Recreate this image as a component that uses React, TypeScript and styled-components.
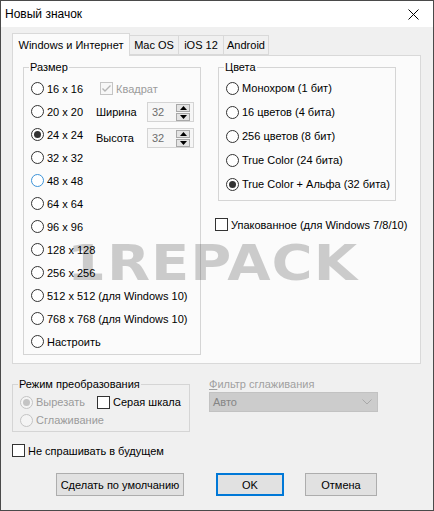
import React from "react";
import styled, { createGlobalStyle } from "styled-components";

const GlobalStyle = createGlobalStyle`
  html, body { margin: 0; padding: 0; background: #f0f0f0; }
  body { font-family: "Liberation Sans", Arial, sans-serif; font-size: 11px; color: #000; }
  * { box-sizing: border-box; }
`;

const Window = styled.div`
  position: relative;
  width: 434px;
  height: 511px;
  border: 1px solid #4a4a4a;
  background: #f0f0f0;
  display: flex;
  flex-direction: column;
  overflow: hidden;
`;

const TitleBar = styled.div`
  height: 26px;
  background: #fff;
  display: flex;
  align-items: center;
  justify-content: space-between;
  padding-left: 4px;
  flex: none;
`;

const TitleText = styled.span`
  font-size: 12px;
  color: #000;
`;

const CloseButton = styled.div`
  width: 30px;
  height: 26px;
  display: flex;
  align-items: center;
  justify-content: flex-start;
  padding-left: 5px;
`;

const Body = styled.div`
  flex: 1;
  padding: 6px 12px 0 11px;
  display: flex;
  flex-direction: column;
`;

const TabStrip = styled.div`
  display: flex;
  align-items: flex-end;
  height: 22px;
`;

const Tab = styled.div<{ $active?: boolean; $w: number }>`
  position: relative;
  z-index: ${(p) => (p.$active ? 2 : 1)};
  width: ${(p) => p.$w}px;
  height: ${(p) => (p.$active ? 23 : 20)}px;
  margin-bottom: ${(p) => (p.$active ? -1 : 0)}px;
  background: ${(p) => (p.$active ? "#fbfbfb" : "#f0f0f0")};
  border: 1px solid #d9d9d9;
  border-bottom: ${(p) => (p.$active ? "none" : "1px solid #d9d9d9")};
  border-left: ${(p) => (p.$active ? "1px solid #d9d9d9" : "none")};
  display: flex;
  align-items: center;
  justify-content: center;
  padding-bottom: ${(p) => (p.$active ? 1 : 0)}px;
  white-space: nowrap;
`;

const Panel = styled.div`
  height: 309px;
  border: 1px solid #d9d9d9;
  background: #fbfbfb;
  padding: 5px 0 0 10px;
  display: flex;
  align-items: flex-start;
`;

const GroupBox = styled.fieldset<{ $w: number; $pt: number; $pb: number }>`
  margin: 0;
  min-width: 0;
  width: ${(p) => p.$w}px;
  border: 1px solid #d5d5d5;
  padding: ${(p) => p.$pt}px 4px ${(p) => p.$pb}px 7px;
  flex: none;
`;

const Legend = styled.legend`
  margin-left: -2px;
  padding: 0 1px;
  line-height: 12px;
  font-size: 11px;
`;

const SizeLayout = styled.div`
  display: flex;
  align-items: flex-start;
`;

const RadioColumn = styled.div`
  width: 65px;
  flex: none;
  display: flex;
  flex-direction: column;
`;

const Option = styled.label<{ $h: number; $disabled?: boolean }>`
  height: ${(p) => p.$h}px;
  display: flex;
  align-items: center;
  gap: 3px;
  white-space: nowrap;
  color: ${(p) => (p.$disabled ? "#9b9b9b" : "#000")};
`;

const RadioMark = styled.span<{ $checked?: boolean; $disabled?: boolean; $focused?: boolean }>`
  width: 13px;
  height: 13px;
  flex: none;
  border-radius: 50%;
  border: 1px solid
    ${(p) => (p.$disabled ? "#c4c4c4" : p.$focused ? "#3c93d8" : "#333")};
  background: ${(p) => (p.$disabled ? "#f4f4f4" : "#fff")};
  display: flex;
  align-items: center;
  justify-content: center;
  &::after {
    content: "";
    display: ${(p) => (p.$checked ? "block" : "none")};
    width: 7px;
    height: 7px;
    border-radius: 50%;
    background: ${(p) => (p.$disabled ? "#c4c4c4" : "#333")};
  }
`;

const CheckMark = styled.span<{ $disabled?: boolean }>`
  width: 13px;
  height: 13px;
  flex: none;
  border: 1px solid ${(p) => (p.$disabled ? "#c4c4c4" : "#333")};
  background: ${(p) => (p.$disabled ? "#f7f7f7" : "#fff")};
  display: flex;
  align-items: center;
  justify-content: center;
`;

const SideControls = styled.div`
  display: flex;
  flex-direction: column;
`;

const SideCheck = styled(Option)`
  margin-left: 4px;
`;

const FieldRow = styled.div<{ $mt: number }>`
  display: flex;
  align-items: center;
  margin-top: ${(p) => p.$mt}px;
`;

const FieldLabel = styled.span`
  width: 51px;
  flex: none;
`;

const SpinBox = styled.div`
  width: 47px;
  height: 20px;
  border: 1px solid #d4d4d4;
  background: #f6f6f6;
  display: flex;
  align-items: center;
  justify-content: space-between;
  padding: 0 3px 0 4px;
`;

const SpinValue = styled.span`
  color: #6d6d6d;
`;

const SpinButtons = styled.div`
  width: 14px;
  display: flex;
  flex-direction: column;
  gap: 1px;
`;

const SpinButton = styled.div`
  height: 8px;
  background: #e3e3e3;
  border: 1px solid #a8a8a8;
  display: flex;
  align-items: center;
  justify-content: center;
`;

const RightColumn = styled.div`
  margin-left: 14px;
  display: flex;
  flex-direction: column;
`;

const ColorsBox = styled(GroupBox)`
  margin-left: 3px;
`;

const PackedRow = styled(Option)`
  margin-top: 17px;
`;

const BottomRow = styled.div`
  margin-top: 14px;
  display: flex;
  align-items: flex-start;
`;

const ModeRow = styled.div`
  display: flex;
  align-items: center;
`;

const ModeRadio = styled(Option)`
  width: 77px;
`;

const FilterColumn = styled.div`
  margin-left: 19px;
  width: 169px;
  display: flex;
  flex-direction: column;
`;

const FilterLabel = styled.span`
  line-height: 12px;
  height: 12px;
  color: #a0a0a0;
  u { text-decoration: underline; }
`;

const Combo = styled.div`
  margin-top: 2px;
  height: 20px;
  background: #cccccc;
  border: 1px solid #c2c2c2;
  display: flex;
  align-items: center;
  justify-content: space-between;
  padding: 0 5px 0 3px;
  color: #858585;
`;

const DontAsk = styled(Option)`
  margin-top: 12px;
`;

const ButtonRow = styled.div`
  margin-top: 16px;
  display: flex;
`;

const Button = styled.div<{ $w: number; $ml: number; $primary?: boolean }>`
  width: ${(p) => p.$w}px;
  height: 23px;
  margin-left: ${(p) => p.$ml}px;
  background: #e1e1e1;
  border: 1px solid ${(p) => (p.$primary ? "#0078d7" : "#adadad")};
  box-shadow: ${(p) => (p.$primary ? "inset 0 0 0 1px #0078d7" : "none")};
  display: flex;
  align-items: center;
  justify-content: center;
  white-space: nowrap;
`;

const Watermark = styled.div`
  position: absolute;
  left: 66px;
  top: 237px;
  font-family: "DejaVu Sans", sans-serif;
  font-weight: bold;
  font-size: 56px;
  line-height: 56px;
  letter-spacing: 1px;
  color: rgba(0, 0, 0, 0.19);
  transform: scaleY(0.89);
  transform-origin: top left;
  pointer-events: none;
  white-space: nowrap;
`;

const Check = ({ color }: { color: string }) => (
  <svg width="11" height="11" viewBox="0 0 11 11">
    <polyline points="1.5,5.5 4,8 9.5,2.5" fill="none" stroke={color} strokeWidth="1.4" />
  </svg>
);

const UpArrow = () => (
  <svg width="7" height="4" viewBox="0 0 7 4">
    <polygon points="0,4 7,4 3.5,0" fill="#000" />
  </svg>
);

const DownArrow = () => (
  <svg width="7" height="4" viewBox="0 0 7 4">
    <polygon points="0,0 7,0 3.5,4" fill="#000" />
  </svg>
);

const sizes = [
  "16 x 16",
  "20 x 20",
  "24 x 24",
  "32 x 32",
  "48 x 48",
  "64 x 64",
  "96 x 96",
  "128 x 128",
  "256 x 256",
  "512 x 512 (для Windows 10)",
  "768 x 768 (для Windows 10)",
  "Настроить",
];

const colors = [
  "Монохром (1 бит)",
  "16 цветов (4 бита)",
  "256 цветов (8 бит)",
  "True Color (24 бита)",
  "True Color + Альфа (32 бита)",
];

const Spin = ({ value }: { value: string }) => (
  <SpinBox>
    <SpinValue>{value}</SpinValue>
    <SpinButtons>
      <SpinButton>
        <UpArrow />
      </SpinButton>
      <SpinButton>
        <DownArrow />
      </SpinButton>
    </SpinButtons>
  </SpinBox>
);

export default function App() {
  return (
    <>
      <GlobalStyle />
      <Window>
        <TitleBar>
          <TitleText>Новый значок</TitleText>
          <CloseButton>
            <svg width="11" height="11" viewBox="0 0 11 11">
              <path d="M0.5 0.5 L10.5 10.5 M10.5 0.5 L0.5 10.5" stroke="#000" strokeWidth="1" />
            </svg>
          </CloseButton>
        </TitleBar>
        <Body>
          <TabStrip>
            <Tab $active $w={118}>Windows и Интернет</Tab>
            <Tab $w={49}>Mac OS</Tab>
            <Tab $w={45}>iOS 12</Tab>
            <Tab $w={45}>Android</Tab>
          </TabStrip>
          <Panel>
            <GroupBox $w={178} $pt={4} $pb={1}>
              <Legend>Размер</Legend>
              <SizeLayout>
                <RadioColumn>
                  {sizes.map((s) => (
                    <Option key={s} $h={23}>
                      <RadioMark $checked={s === "24 x 24"} $focused={s === "48 x 48"} />
                      {s}
                    </Option>
                  ))}
                </RadioColumn>
                <SideControls>
                  <SideCheck $h={23} $disabled>
                    <CheckMark $disabled>
                      <Check color="#b5b5b5" />
                    </CheckMark>
                    Квадрат
                  </SideCheck>
                  <FieldRow $mt={2}>
                    <FieldLabel>Ширина</FieldLabel>
                    <Spin value="32" />
                  </FieldRow>
                  <FieldRow $mt={6}>
                    <FieldLabel>Высота</FieldLabel>
                    <Spin value="32" />
                  </FieldRow>
                </SideControls>
              </SizeLayout>
            </GroupBox>
            <RightColumn>
              <ColorsBox $w={178} $pt={3} $pb={4}>
                <Legend>Цвета</Legend>
                {colors.map((c, i) => (
                  <Option key={c} $h={24}>
                    <RadioMark $checked={i === 4} />
                    {c}
                  </Option>
                ))}
              </ColorsBox>
              <PackedRow $h={13}>
                <CheckMark />
                Упакованное (для Windows 7/8/10)
              </PackedRow>
            </RightColumn>
          </Panel>
          <BottomRow>
            <GroupBox $w={178} $pt={3} $pb={2}>
              <Legend>Режим преобразования</Legend>
              <ModeRow>
                <ModeRadio $h={18} $disabled>
                  <RadioMark $checked $disabled />
                  Вырезать
                </ModeRadio>
                <Option $h={18}>
                  <CheckMark />
                  Серая шкала
                </Option>
              </ModeRow>
              <Option $h={18} $disabled>
                <RadioMark $disabled />
                Сглаживание
              </Option>
            </GroupBox>
            <FilterColumn>
              <FilterLabel>
                <u>Ф</u>ильтр сглаживания
              </FilterLabel>
              <Combo>
                <span>Авто</span>
                <svg width="10" height="6" viewBox="0 0 10 6">
                  <polyline points="0.5,0.5 5,5 9.5,0.5" fill="none" stroke="#a8a8a8" strokeWidth="1" />
                </svg>
              </Combo>
            </FilterColumn>
          </BottomRow>
          <DontAsk $h={13}>
            <CheckMark />
            Не спрашивать в будущем
          </DontAsk>
          <ButtonRow>
            <Button $w={128} $ml={44}>Сделать по умолчанию</Button>
            <Button $w={68} $ml={32} $primary>OK</Button>
            <Button $w={72} $ml={21}>Отмена</Button>
          </ButtonRow>
        </Body>
        <Watermark>1REPACK</Watermark>
      </Window>
    </>
  );
}
